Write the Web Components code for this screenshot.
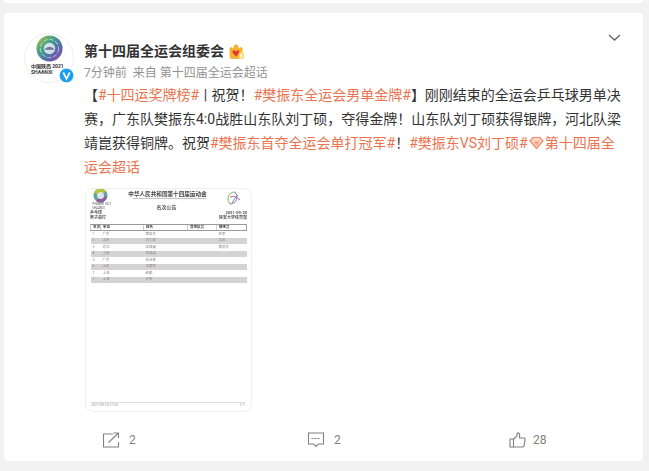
<!DOCTYPE html>
<html lang="zh">
<head>
<meta charset="utf-8">
<title>第十四届全运会组委会</title>
<style>
    html, body { margin: 0; height: 471px; overflow: hidden; background: #f2f2f2; }
    body { font-family: Roboto, "Noto Sans CJK SC", sans-serif; }
</style>
</head>
<body>
<feed-page>
    <feed-card>
        <user-head slot="head" name="第十四届全运会组委会" time="7分钟前" source="来自 第十四届全运会超话"></user-head>
        <post-text slot="text">
            【<a>#十四运奖牌榜#</a> | 祝贺！<a>#樊振东全运会男单金牌#</a>】刚刚结束的全运会乒乓球男单决赛，广东队樊振东4:0战胜山东队刘丁硕，夺得金牌！山东队刘丁硕获得银牌，河北队梁靖崑获得铜牌。祝贺<a>#樊振东首夺全运会单打冠军#</a>！<a>#樊振东VS刘丁硕#</a><svg width="15" height="14" viewBox="0 0 15 14" style="vertical-align:-2px;margin:0 1px"><path d="M1 5 4 1.500h7L14 5 7.500 12.500z" fill="#fbd3c4" stroke="#ee8a66" stroke-width="1.200"/><path d="M4.500 5.500h6L7.500 9.500z" fill="#f2a285"/></svg><a>第十四届全运会超话</a>
        </post-text>
        <doc-thumb slot="media"></doc-thumb>
        <action-bar slot="actions" share="2" comment="2" like="28"></action-bar>
    </feed-card>
</feed-page>

<script>
class FeedPage extends HTMLElement {
    connectedCallback() {
        this.attachShadow({ mode: 'open' });
        this.shadowRoot.innerHTML = `
            <style>
                :host { display: block; padding: 0 6px 10px 4px; }
                .prev { height: 3px; background: #fff; border-radius: 0 0 4px 4px; margin-bottom: 10px; }
            </style>
            <div class="prev"></div>
            <slot></slot>
        `;
    }
}

class FeedCard extends HTMLElement {
    connectedCallback() {
        this.attachShadow({ mode: 'open' });
        this.shadowRoot.innerHTML = `
            <style>
                :host {
                    display: block;
                    position: relative;
                    height: 448px;
                    box-sizing: border-box;
                    background: #fff;
                    border-radius: 4px;
                    padding: 20px 20px 0 20px;
                }
                .body { margin-left: 60px; }
                .chevron { position: absolute; top: 21px; right: 22px; }
            </style>
            <svg class="chevron" width="13" height="7" viewBox="0 0 13 7"><path d="M1 1l5.500 5L12 1" fill="none" stroke="#636363" stroke-width="1.300"/></svg>
            <slot name="head"></slot>
            <div class="body">
                <slot name="text"></slot>
                <slot name="media"></slot>
            </div>
            <slot name="actions"></slot>
        `;
    }
}

class UserHead extends HTMLElement {
    connectedCallback() {
        this.attachShadow({ mode: 'open' });
        this.shadowRoot.innerHTML = `
            <style>
                :host { display: flex; gap: 10px; height: 50px; color: #333; }
                .avatar {
                    position: relative;
                    width: 50px;
                    height: 50px;
                    flex: none;
                    box-sizing: border-box;
                    border: 1px solid #eee;
                    border-radius: 50%;
                    background: #fff;
                }
                .avatar .logo { position: absolute; left: 11px; top: 1px; filter: blur(.4px); }
                .cap {
                    position: absolute;
                    left: 6px;
                    top: 29px;
                    width: 36px;
                    overflow: hidden;
                    font-size: 5px;
                    line-height: 6px;
                    white-space: nowrap;
                    color: #333;
                    font-weight: 700;
                }
                .badge { position: absolute; right: -1px; bottom: -1px; }
                .meta { padding-top: 7px; }
                .name {
                    display: flex;
                    align-items: center;
                    gap: 5px;
                    font-size: 14px;
                    line-height: 22px;
                    font-weight: 700;
                    color: #333;
                }
                .time { margin-top: 2px; font-size: 12px; line-height: 18px; color: #939393; white-space: pre; }
            </style>
            <div class="avatar">
                <svg class="logo" width="27" height="27" viewBox="0 0 31 31">
                    <defs>
                        <linearGradient id="ring" x1="0" y1="0" x2="1" y2="1">
                            <stop offset="0" stop-color="#b7c63a"/>
                            <stop offset=".4" stop-color="#3f9d8f"/>
                            <stop offset=".7" stop-color="#5b63ad"/>
                            <stop offset="1" stop-color="#a24b9d"/>
                        </linearGradient>
                    </defs>
                    <circle cx="15.500" cy="15.500" r="15" fill="url(#ring)"/>
                    <circle cx="15.500" cy="15.500" r="10.500" fill="none" stroke="#fff" stroke-width="1" stroke-dasharray="5 2" opacity=".7"/>
                    <circle cx="15.500" cy="15.500" r="6.500" fill="#fff" opacity=".75"/>
                    <path d="M9.500 17q6-7 12 0z" fill="#6f6f9c"/>
                </svg>
                <div class="cap">中国陕西 2021<br>SHAANXI</div>
                <svg class="badge" width="15" height="15" viewBox="0 0 15 15">
                    <circle cx="7.500" cy="7.500" r="7.200" fill="#1a9cf0" stroke="#fff" stroke-width=".6"/>
                    <path d="M4.300 4.500 7.500 10.800 10.700 4.500" fill="none" stroke="#fff" stroke-width="1.700"/>
                </svg>
            </div>
            <div class="meta">
                <div class="name">
                    <span>${this.getAttribute('name')}</span>
                    <svg width="15" height="15" viewBox="0 0 15 15">
                        <path d="M.8 5.500Q.5 3.500 2.300 3.500 3.500 3.600 3.800 5 5 4 5 2.500 5 .8 7 .8 9 .8 9 2.500 9 4 10.200 5 10.500 3.600 11.700 3.500 13.500 3.500 13.200 5.500L12.800 13.500Q12.800 14.500 11.500 14.500H2.500Q1.200 14.500 1.200 13.500z" fill="#f7b52c" stroke="#e89a12" stroke-width=".5"/>
                        <path d="M7 12.500 3.700 9Q3 6.300 5 6.300 6.500 6.300 7 7.800 7.500 6.300 9 6.300 10.700 6.300 10.300 9z" fill="#e5352d"/>
                        <rect x="9.800" y="8.300" width="5.200" height="6.700" rx="1" fill="#fbd774"/>
                        <path d="M13.300 9.800Q11.300 9.800 11.300 12.200 11.300 13.800 12.400 13.800 13.600 13.800 13.600 12.500 13.600 11.300 12 11.500" fill="none" stroke="#fff" stroke-width=".9"/>
                    </svg>
                </div>
                <div class="time">${this.getAttribute('time')}  ${this.getAttribute('source')}</div>
            </div>
        `;
    }
}

class PostText extends HTMLElement {
    connectedCallback() {
        this.attachShadow({ mode: 'open' });
        this.shadowRoot.innerHTML = `
            <style>
                :host {
                    display: block;
                    font-size: 14px;
                    line-height: 24px;
                    word-spacing: 1px;
                    color: #333;
                    width: 539px;
                }
                ::slotted(a) { color: #eb7350; }
            </style>
            <slot></slot>
        `;
    }
}

class DocThumb extends HTMLElement {
    connectedCallback() {
        this.attachShadow({ mode: 'open' });
        const rows = [
            ['1', '广东', '樊振东', '', '亚军'],
            ['2', '山东', '刘丁硕', '', '马龙'],
            ['3', '河北', '梁靖崑', '', '樊振东'],
            ['4', '重庆', '林高远', '', ''],
            ['5', '广东', '林诗栋', '', ''],
            ['6', '山东', '王楚钦', '', ''],
            ['7', '上海', '赵鹏', '', ''],
            ['7', '上海', '许昕', '', '']
        ];
        this.shadowRoot.innerHTML = `
            <style>
                :host {
                    display: block;
                    position: relative;
                    box-sizing: border-box;
                    width: 167px;
                    height: 224px;
                    margin-top: 9px;
                    margin-left: 1px;
                    border: 1px solid #efefef;
                    border-radius: 8px;
                    background: #fff;
                    overflow: hidden;
                    color: #555;
                }
                .page {
                    height: 100%;
                    box-sizing: border-box;
                    padding: 0 4px;
                    font-size: 4px;
                    line-height: 5px;
                    white-space: nowrap;
                    filter: blur(.3px);
                }
                .title { padding-top: 0; text-align: center; font-size: 5.600px; line-height: 7px; font-weight: 700; color: #444; transform: translateX(-1px); }
                .sub { height: 1px; margin: 0 41px 0 43px; background: #c4c4c4; }
                .head { margin-top: 5px; padding-right: 4px; text-align: center; font-size: 5px; line-height: 6px; font-weight: 700; }
                .logo-l { position: absolute; left: 7px; top: -1px; }
                .cap { position: absolute; left: 6px; top: 14px; font-size: 3px; line-height: 3.500px; color: #555; }
                .logo-r { position: absolute; right: 8px; top: 2px; }
                .info { display: flex; justify-content: space-between; font-weight: 700; }
                table { width: 100%; margin-top: 4px; border-collapse: collapse; table-layout: fixed; }
                th, td { padding: 0 0 0 2px; height: 6.500px; overflow: hidden; text-align: left; font-size: 3.500px; line-height: 5px; }
                thead th { border-top: 1px solid #999; border-bottom: 1px solid #999; border-left: 1px solid #ccc; height: 5px; color: #333; }
                thead th:last-child { border-right: 1px solid #999; }
                tbody tr:nth-child(even) td { background: #d5d3d4; }
                td { color: #888; }
                .foot {
                    position: absolute;
                    left: 5px;
                    right: 6px;
                    top: 213px;
                    border-top: 1px solid #ddd;
                    display: flex;
                    justify-content: space-between;
                    font-size: 3.500px;
                    line-height: 4px;
                    color: #999;
                }
            </style>
            <div class="page" style="padding-top:2px">
                <svg class="logo-l" width="15" height="15" viewBox="0 0 15 15">
                    <circle cx="7.500" cy="7.500" r="7" fill="#5da59c"/>
                    <path d="M1 5A7 7 0 0 1 13 3L7.500 7.500z" fill="#b6c43c"/>
                    <path d="M14 9A7 7 0 0 1 3 13L7.500 7.500z" fill="#8f5aa6"/>
                    <circle cx="7.500" cy="7.500" r="3.500" fill="#dfe3ee"/>
                </svg>
                <div class="cap">中国陕西 2021<br>SHAANXI</div>
                <svg class="logo-r" width="16" height="16" viewBox="0 0 16 16" fill="none" stroke-width="1">
                    <path d="M8 1A7 7 0 0 0 3 13" stroke="#7fb65d"/>
                    <path d="M8 1A7 7 0 0 1 3 13" stroke="#a56ab5"/>
                    <path d="M3 6Q8 4 13 9" stroke="#c05fa0"/>
                    <path d="M5 12Q7 8 11 4" stroke="#4aa3b5"/>
                </svg>
                <div class="title">中华人民共和国第十四届运动会</div>
                <div class="sub"></div>
                <div class="head">名次公告</div>
                <div class="info"><span>乒乓球</span><span>2021-09-20</span></div>
                <div class="info"><span>男子单打</span><span>延安大学体育馆</span></div>
                <table>
                    <colgroup><col style="width:10px"><col style="width:43px"><col style="width:44px"><col style="width:29px"><col></colgroup>
                    <thead><tr><th>名次</th><th>单位</th><th>姓名</th><th>其他队员</th><th>教练员</th></tr></thead>
                    <tbody>
                        ${rows.map(r => `<tr>${r.map(c => `<td>${c}</td>`).join('')}</tr>`).join('')}
                    </tbody>
                </table>
                <div class="foot"><span>2021-09-20 21:55</span><span>1/1</span></div>
            </div>
        `;
    }
}

class ActionBar extends HTMLElement {
    connectedCallback() {
        this.attachShadow({ mode: 'open' });
        this.shadowRoot.innerHTML = `
            <style>
                :host {
                    display: grid;
                    grid-template-columns: 205px 201px 1fr;
                    margin-top: 19px;
                    padding-left: 79px;
                    font-size: 12px;
                    color: #808080;
                }
                .item { display: flex; align-items: center; gap: 9px; height: 18px; }
                .like { gap: 7px; }
                svg { flex: none; display: block; }
            </style>
            <div class="item">
                <svg width="17" height="16" viewBox="0 0 17 16" fill="none" stroke="#808080" stroke-width="1.100">
                    <path d="M10 2H.5v13h15V10"/>
                    <path d="M5.500 10.500 15 1.500M10.500 1H15.500V6"/>
                </svg>
                <span>${this.getAttribute('share')}</span>
            </div>
            <div class="item">
                <svg width="17" height="16" viewBox="0 0 17 16" fill="none" stroke="#808080" stroke-width="1.100">
                    <path d="M.5 1h15v11h-5L8 14.500 5.500 12h-5z"/>
                    <path d="M3.500 6.500h9" stroke-dasharray="2 1"/>
                </svg>
                <span>${this.getAttribute('comment')}</span>
            </div>
            <div class="item like">
                <svg width="17" height="16" viewBox="0 0 17 16" fill="none" stroke="#808080" stroke-width="1.100">
                    <path d="M1 7h3.500v8H1z"/>
                    <path d="M4.500 7 8 4V1.500Q8.500.500 10 1.200 11 2 10.500 6H15.500Q16.500 6.500 16 8L15 14Q14.500 15 13.500 15H4.500"/>
                </svg>
                <span>${this.getAttribute('like')}</span>
            </div>
        `;
    }
}

customElements.define('feed-page', FeedPage);
customElements.define('feed-card', FeedCard);
customElements.define('user-head', UserHead);
customElements.define('post-text', PostText);
customElements.define('doc-thumb', DocThumb);
customElements.define('action-bar', ActionBar);
</script>
</body>
</html>
